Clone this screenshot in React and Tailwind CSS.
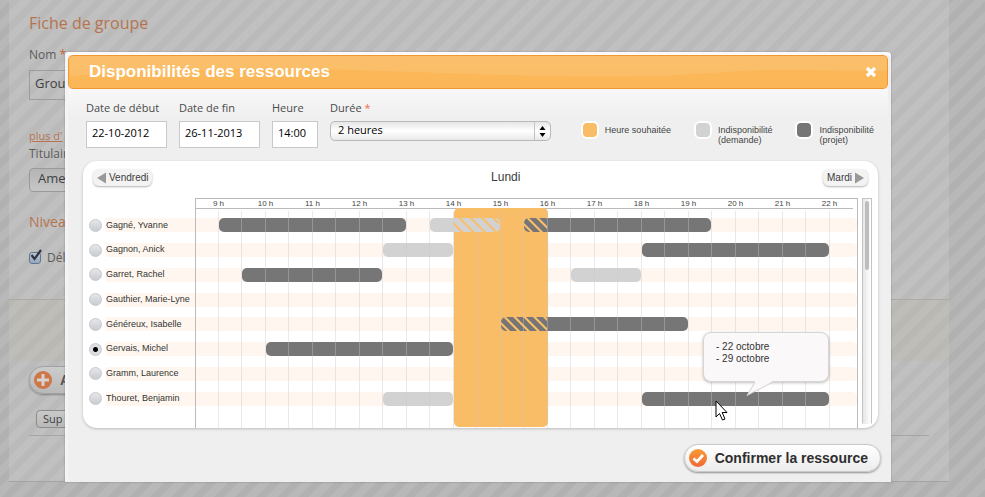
const hours = [9, 10, 11, 12, 13, 14, 15, 16, 17, 18, 19, 20, 21, 22];
const DAY_START = 8.5;
const WISH = { from: 14, to: 16 };

const people = [
  { name: "Gagné, Yvanne", bars: [
    { from: 9, to: 13, kind: "project" },
    { from: 13.5, to: 15, kind: "request" },
    { from: 15.5, to: 19.5, kind: "project" },
  ] },
  { name: "Gagnon, Anick", bars: [
    { from: 12.5, to: 14, kind: "request" },
    { from: 18, to: 22, kind: "project" },
  ] },
  { name: "Garret, Rachel", bars: [
    { from: 9.5, to: 12.5, kind: "project" },
    { from: 16.5, to: 18, kind: "request" },
  ] },
  { name: "Gauthier, Marie-Lyne", bars: [] },
  { name: "Généreux, Isabelle", bars: [{ from: 15, to: 19, kind: "project" }] },
  { name: "Gervais, Michel", selected: true, bars: [{ from: 10, to: 14, kind: "project" }] },
  { name: "Gramm, Laurence", bars: [] },
  { name: "Thouret, Benjamin", bars: [
    { from: 12.5, to: 14, kind: "request" },
    { from: 18, to: 22, kind: "project" },
  ] },
];

const column = (hour) => (hour - DAY_START) * 2 + 1;

function Bar({ from, to, kind }) {
  const start = Math.max(from, WISH.from);
  const end = Math.min(to, WISH.to);
  const overlaps = end > start;
  const project = kind === "project";
  return (
    <div
      className={
        project
          ? "relative z-20 row-start-1 mr-px h-3.5 overflow-hidden rounded-[5px] bg-[#767676]"
          : "relative z-20 row-start-1 mr-px h-3.5 overflow-hidden rounded-[5px] bg-[#d2d2d2]"
      }
      style={{ gridColumn: `${column(from)} / ${column(to)}` }}
    >
      {overlaps && (
        <div
          className={
            project
              ? "h-full bg-[repeating-linear-gradient(45deg,transparent_0_4px,#ffc068_5px_6px,transparent_7px)]"
              : "h-full bg-[repeating-linear-gradient(45deg,transparent_0_5px,#fbbd67_6px_7px,transparent_8px)]"
          }
          style={{
            marginLeft: `${((start - from) / (to - from)) * 100}%`,
            width: `${((end - start) / (to - from)) * 100}%`,
          }}
        />
      )}
    </div>
  );
}

function LegendItem({ swatch, children }) {
  return (
    <li className="flex items-start gap-1.5">
      <span className={`size-[18px] shrink-0 rounded-md border-2 border-white ${swatch}`} />
      <span className="pt-1 text-[9px] leading-[10px]">{children}</span>
    </li>
  );
}

function Field({ id, label, value, width }) {
  return (
    <div className={`flex flex-col gap-[5px] ${width}`}>
      <label htmlFor={id} className="text-[11px] leading-4 text-[#4a4a4a]">{label}</label>
      <input
        id={id}
        type="text"
        defaultValue={value}
        className="h-[27px] w-full border border-[#c9c9c9] bg-white px-[5px] pb-1 text-[11px] text-black outline-none"
      />
    </div>
  );
}

function BackgroundPage() {
  return (
    <main className="mr-9 ml-[9px] border-b border-[#a3a3a3] bg-white/12 font-['Open_Sans',sans-serif] text-[#5c5c5c]">
      <div className="flex h-[299px] flex-col items-start px-5 pt-[11px]">
        <h1 className="text-[16px] leading-6 font-medium text-[#b5744e]">Fiche de groupe</h1>
        <label htmlFor="nom" className="mt-3 text-[12px] leading-4">
          Nom <span className="text-[#c0633f]">*</span>
        </label>
        <input
          id="nom"
          type="text"
          defaultValue="Grou"
          className="mt-[7px] h-[30px] w-60 border border-[#9c9c9c] bg-transparent px-[5px] pb-1 text-[13px] text-[#3f3f3f] outline-none"
        />
        <a href="#plus" className="mt-7 text-[11px] leading-4 text-[#b5744e] underline">plus d'</a>
        <label htmlFor="titulaire" className="mt-0.5 text-[12px] leading-4">Titulair</label>
        <select
          id="titulaire"
          className="mt-1.5 h-6 w-60 appearance-none rounded border border-[#9a9a9a] bg-linear-to-b from-[#b4b4b4] to-[#c6c6c6] px-2 pb-1 text-[13px] leading-4 text-[#3f3f3f]"
        >
          <option>Ame</option>
        </select>
        <h2 className="mt-[18px] text-[14px] leading-6 font-medium text-[#b5744e]">Nivea</h2>
        <label className="mt-4 flex items-center gap-1.5 text-[12px] leading-4">
          <span className="relative size-3">
            <input
              type="checkbox"
              defaultChecked
              className="block size-3 appearance-none rounded-[3px] border border-[#66768a] bg-linear-to-b from-[#b9c4d0] to-[#93a9c0]"
            />
            <svg viewBox="0 0 14 14" className="pointer-events-none absolute -top-1 left-0 size-3.5" fill="none" stroke="#2b3442" strokeWidth="2.2">
              <path d="M2.500 7 5.500 11 12 2" />
            </svg>
          </span>
          Dél
        </label>
      </div>
      <div className="h-[62px] border-t border-[#aaa] bg-[#c0b080]/12" />
      <div className="px-5 pt-[5px] pb-[45px]">
        <button
          type="button"
          className="flex h-7 w-60 items-center gap-2 rounded-full border border-[#a2a2a2] bg-linear-to-b from-[#cbcbcb] to-[#b9b9b9] pl-1 font-['Liberation_Sans',Arial,sans-serif] text-[14px] font-bold text-[#555] shadow-[0_1px_2px_rgba(0,0,0,0.3)]"
        >
          <svg viewBox="0 0 18 18" className="size-[18px]">
            <circle cx="9" cy="9" r="9" fill="#cf7647" />
            <path d="M9 3v12M3 9h12" stroke="#d6d2cf" strokeWidth="3" />
          </svg>
          A
        </button>
        <div className="mt-4 border-b border-[#a5a5a5] pb-[7px] pl-[7px]">
          <button
            type="button"
            className="block h-[18px] w-24 rounded border border-[#8c8c8c] bg-linear-to-b from-[#c9c9c9] to-[#b9b9b9] pl-1.5 text-left text-[11px] leading-4 text-[#3f3f3f]"
          >
            Sup
          </button>
        </div>
      </div>
    </main>
  );
}

function Schedule() {
  return (
    <div className="flex gap-1 pr-1.5">
      <div className="relative min-w-0 flex-1">
        <div className="ml-28 h-[15px] border-t border-[#b9b9b9] pr-[5px]">
          <div className="grid h-[10px] grid-cols-14 text-center text-[8px] leading-[9px] text-[#444] shadow-[inset_0_-1px_#bbb]">
            {hours.map((h) => (
              <span key={h}>{h} h</span>
            ))}
          </div>
        </div>

        <fieldset aria-label="Ressources" className="flex h-[198px] flex-col">
          {people.map((p) => (
            <div key={p.name} className="flex flex-1 items-center">
              <label className="flex h-3.5 w-28 items-center gap-1 pl-1.5 text-[9px] whitespace-nowrap text-[#333]">
                <input
                  type="radio"
                  name="ressource"
                  defaultChecked={p.selected}
                  className="size-[13px] shrink-0 appearance-none rounded-full border border-[#c6c8cc] bg-linear-to-b from-[#e6e7e9] to-[#c9ccd0] checked:bg-[radial-gradient(circle,#000_0_2px,#dcdee1_3px)]"
                />
                <span className="flex h-3.5 flex-1 items-center bg-[#fff7ef]">{p.name}</span>
              </label>
              <div className="grid h-3.5 flex-1 grid-cols-28 rounded-r-md bg-[#fff7ef] pr-[5px]">
                {p.bars.map((b) => (
                  <Bar key={b.from} {...b} />
                ))}
              </div>
            </div>
          ))}
        </fieldset>
        <div className="h-[17px]" />

        <div className="pointer-events-none absolute inset-y-0 right-0 left-28 grid grid-cols-28 border-x border-[#bbb] pt-[10px] pr-1">
          <div className="z-10 col-span-4 col-start-12 row-start-1 mb-px rounded-[5px] bg-[#fabd67]" />
        </div>
        <div className="pointer-events-none absolute right-0 bottom-0 left-28 z-30 grid h-[217px] grid-cols-28 pr-[5px]">
          {Array.from({ length: 27 }, (_, i) => (
            <div key={i} className="border-r border-[#c8c8d0]/40" />
          ))}
        </div>

        <div role="tooltip" className="absolute right-[29px] bottom-[46px] z-40 h-[50px] w-[126px] rounded-lg border border-[#d6d4d6] bg-[#faf8f9] px-3 pt-2 text-[10px] leading-3 text-[#333] shadow-[0_1px_3px_rgba(0,0,0,0.25)]">
          <p>- 22 octobre</p>
          <p>- 29 octobre</p>
          <svg viewBox="0 0 32 16" className="absolute top-12 left-[42px] h-4 w-8">
            <path d="M9 0 1 14.500 27 0Z" fill="#faf8f9" />
            <path d="M9 1 1 14.500 27 1" fill="none" stroke="#d3d1d3" />
          </svg>
        </div>
        <svg viewBox="0 0 13 21" className="pointer-events-none absolute right-[130px] bottom-[7px] z-50 h-[21px] w-[13px]">
          <path d="M1 1v16l3.500-3.500L7.500 20l2.500-1-2.800-6.500H12Z" fill="#fff" stroke="#000" />
        </svg>
      </div>
      <div className="mb-1 w-[10px] border border-[#c4c4c4] border-b-transparent bg-linear-to-r from-[#e6e6e6] to-white px-0.5 pt-0.5">
        <div className="h-[69px] rounded-full bg-[#bdbdbd]" />
      </div>
    </div>
  );
}

export default function App() {
  return (
    <div className="relative min-h-screen overflow-hidden bg-[#b6b6b6] bg-[repeating-linear-gradient(135deg,#b8b8b8_0_7px,#b1b1b1_8px_14px,#b8b8b8_15px)] font-['Liberation_Sans',Arial,sans-serif]">
      <BackgroundPage />

      <div className="absolute inset-x-0 top-[52px] mr-[94px] ml-[65px]">
        <section
          role="dialog"
          aria-labelledby="titre"
          className="rounded-t bg-[#efefef] p-[3px] pb-2.5 shadow-[0_0_2px_rgba(0,0,0,0.3),inset_0_3px_#fafafa,inset_3px_0_#f4f4f4]"
        >
          <header className="relative flex h-[34px] items-center justify-between overflow-hidden rounded-[5px] border border-[#f0982f] bg-linear-to-b from-[#fbbf6c] to-[#fbbc63] pr-2.5 pl-5">
            <svg viewBox="0 0 820 35" preserveAspectRatio="none" className="absolute inset-0 size-full">
              <path d="M0 22C120 14 200 12 330 17S560 26 640 19 760 17 820 16V35H0Z" fill="#fbb24f" opacity="0.6" />
            </svg>
            <h2 id="titre" className="relative text-[17px] font-bold text-white">Disponibilités des ressources</h2>
            <button type="button" aria-label="Fermer" className="relative">
              <svg viewBox="0 0 12 12" className="size-3" fill="none" stroke="#fff" strokeWidth="3.200">
                <path d="M2 2l8 8M10 2l-8 8" />
              </svg>
            </button>
          </header>

          <form className="flex flex-col" onSubmit={(e) => e.preventDefault()}>
            <div className="flex items-start justify-between bg-linear-to-b from-[#f8f8f8] to-[#efefef] to-40% pt-[11px] pr-3.5 pb-[13px] pl-[18px]">
              <div className="flex items-start gap-3 font-['Open_Sans',sans-serif]">
                <Field id="debut" label="Date de début" value="22-10-2012" width="w-[81px]" />
                <Field id="fin" label="Date de fin" value="26-11-2013" width="w-[81px]" />
                <Field id="heure" label="Heure" value="14:00" width="w-[46px]" />
                <div className="flex w-[221px] flex-col gap-[5px]">
                  <label htmlFor="duree" className="text-[11px] leading-4 text-[#4a4a4a]">
                    Durée <span className="text-[#f0704a]">*</span>
                  </label>
                  <div className="relative">
                    <select
                      id="duree"
                      className="block h-5 w-full appearance-none rounded-[5px] border border-[#b9b9b9] bg-linear-to-b from-[#e6e6e6] via-white to-[#e9e9e9] px-[7px] pb-0.5 text-[11px] leading-4 text-black"
                    >
                      <option>2 heures</option>
                    </select>
                    <svg viewBox="0 0 17 20" className="pointer-events-none absolute top-0 right-0 h-5 w-[17px]">
                      <path d="M.5 1v18" stroke="#c4c4c4" />
                      <path d="M8.500 5 11.500 9h-6ZM8.500 16 11.500 12h-6Z" fill="#000" />
                    </svg>
                  </div>
                </div>
              </div>
              <ul className="flex gap-[23px] pt-[21px] text-[#444]">
                <LegendItem swatch="bg-[#fabd67]">Heure souhaitée</LegendItem>
                <LegendItem swatch="bg-[#d2d2d2]">Indisponibilité<br />(demande)</LegendItem>
                <LegendItem swatch="bg-[#767676]">Indisponibilité<br />(projet)</LegendItem>
              </ul>
            </div>

            <div className="mr-[10px] ml-[15px] overflow-hidden rounded-[14px] bg-white shadow-[0_1px_3px_rgba(0,0,0,0.22)]">
              <div className="flex h-[37px] items-start pt-2 pr-2.5 pl-2.5 text-[#3c3c3c]">
                <button type="button" className="flex h-[17px] items-center gap-[3px] rounded-md bg-[#f3f3f3] px-1 text-[10px] shadow-[0_1px_2px_rgba(0,0,0,0.3)]">
                  <svg viewBox="0 0 9 12" className="h-3 w-[9px]"><path d="M0 6 9 .5v11Z" fill="#999" /></svg>
                  Vendredi
                </button>
                <h3 className="flex-1 pl-9 text-center text-[12px] leading-4">Lundi</h3>
                <button type="button" className="flex h-[17px] items-center gap-[3px] rounded-md bg-[#f3f3f3] px-1 text-[10px] shadow-[0_1px_2px_rgba(0,0,0,0.3)]">
                  Mardi
                  <svg viewBox="0 0 9 12" className="h-3 w-[9px]"><path d="M9 6 0 .5v11Z" fill="#999" /></svg>
                </button>
              </div>
              <Schedule />
            </div>

            <button
              type="submit"
              className="mt-4 mr-[7px] flex h-7 items-center gap-2 self-end rounded-full border border-[#c9c9c9] bg-linear-to-b from-white to-[#ececec] pr-3 pl-1 text-[14px] font-bold text-[#2e2e2e] shadow-[0_1px_2px_rgba(0,0,0,0.4)]"
            >
              <svg viewBox="0 0 18 18" className="size-[18px]">
                <defs>
                  <linearGradient id="orange" x1="0" y1="0" x2="0" y2="1">
                    <stop offset="0" stopColor="#f99a35" />
                    <stop offset="1" stopColor="#ee6a35" />
                  </linearGradient>
                </defs>
                <circle cx="9" cy="9" r="9" fill="url(#orange)" />
                <path d="M4.500 9.500 8 12.500 14 6" fill="none" stroke="#fff" strokeWidth="2.800" />
              </svg>
              Confirmer la ressource
            </button>
          </form>
        </section>
      </div>
    </div>
  );
}
